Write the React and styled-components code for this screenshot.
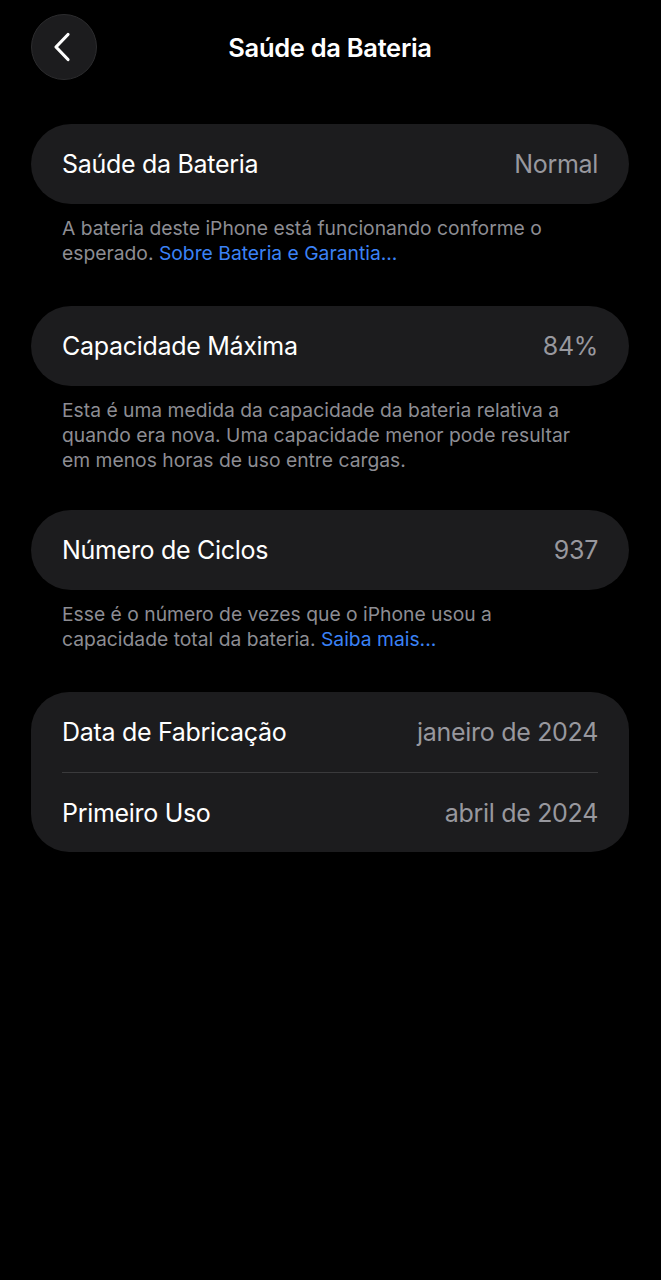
import React from "react";
import styled, { createGlobalStyle } from "styled-components";

const Global = createGlobalStyle`
  html, body { margin: 0; padding: 0; background: #000; }
  body { font-family: Inter, "Noto Sans", "Liberation Sans", sans-serif; color: #fff; -webkit-font-smoothing: antialiased; }
`;

const Page = styled.div`
  width: 661px;
  min-height: 1280px;
  background: #000;
  padding: 0 32px 0 31px;
  box-sizing: border-box;
`;

const Header = styled.header`
  position: relative;
  height: 94px;
  display: flex;
  align-items: center;
  justify-content: center;
`;

const BackButton = styled.button`
  position: absolute;
  left: 0;
  top: 14px;
  width: 66px;
  height: 66px;
  border-radius: 50%;
  background: #1c1c1e;
  border: 1px solid #2c2c2e;
  box-sizing: border-box;
  display: flex;
  align-items: center;
  justify-content: center;
  padding: 0 4px 0 0;
  cursor: pointer;
`;

const Title = styled.h1`
  margin: 0;
  font-size: 25.5px;
  font-weight: 600;
  letter-spacing: -0.3px;
  color: #fff;
`;

const Content = styled.main`
  padding-top: 30px;
  display: flex;
  flex-direction: column;
`;

const Section = styled.section`
  margin-bottom: ${(p) => (p.$tight ? "37px" : "40px")};
`;

const Card = styled.div`
  background: #1c1c1e;
  border-radius: ${(p) => (p.$multi ? "38px" : "40px")};
  padding: 0 31px;
  display: flex;
  flex-direction: column;
`;

const Row = styled.div`
  height: 80px;
  display: flex;
  align-items: center;
  justify-content: space-between;
  border-top: ${(p) => (p.$divider ? "1.5px solid #3a3a3c" : "none")};
  box-sizing: border-box;
  font-size: 25px;
  letter-spacing: -0.3px;
`;

const Label = styled.span`
  color: #fff;
`;

const Value = styled.span`
  color: #98989e;
`;

const Footnote = styled.p`
  margin: 0;
  padding: 12px 44px 0 31px;
  font-size: 19.3px;
  line-height: 25px;
  color: #8d8d93;
`;

const Link = styled.a`
  color: #3b82f6;
  text-decoration: none;
`;

const Chevron = () => (
  <svg width="18" height="30" viewBox="0 0 18 30" fill="none">
    <path d="M15 2.5 L3 15 L15 27.5" stroke="#fff" strokeWidth="3.2" strokeLinecap="round" strokeLinejoin="round" />
  </svg>
);

export default function App() {
  return (
    <>
      <Global />
      <Page>
        <Header>
          <BackButton aria-label="Voltar">
            <Chevron />
          </BackButton>
          <Title>Saúde da Bateria</Title>
        </Header>
        <Content>
          <Section>
            <Card>
              <Row>
                <Label>Saúde da Bateria</Label>
                <Value>Normal</Value>
              </Row>
            </Card>
            <Footnote>
              A bateria deste iPhone está funcionando conforme o esperado.{" "}
              <Link href="#">Sobre Bateria e Garantia...</Link>
            </Footnote>
          </Section>
          <Section $tight>
            <Card>
              <Row>
                <Label>Capacidade Máxima</Label>
                <Value>84%</Value>
              </Row>
            </Card>
            <Footnote>
              Esta é uma medida da capacidade da bateria relativa a quando era nova. Uma capacidade menor pode resultar em menos horas de uso entre cargas.
            </Footnote>
          </Section>
          <Section>
            <Card>
              <Row>
                <Label>Número de Ciclos</Label>
                <Value>937</Value>
              </Row>
            </Card>
            <Footnote>
              Esse é o número de vezes que o iPhone usou a capacidade total da bateria.{" "}
              <Link href="#">Saiba mais...</Link>
            </Footnote>
          </Section>
          <Section>
            <Card $multi>
              <Row>
                <Label>Data de Fabricação</Label>
                <Value>janeiro de 2024</Value>
              </Row>
              <Row $divider>
                <Label>Primeiro Uso</Label>
                <Value>abril de 2024</Value>
              </Row>
            </Card>
          </Section>
        </Content>
      </Page>
    </>
  );
}
